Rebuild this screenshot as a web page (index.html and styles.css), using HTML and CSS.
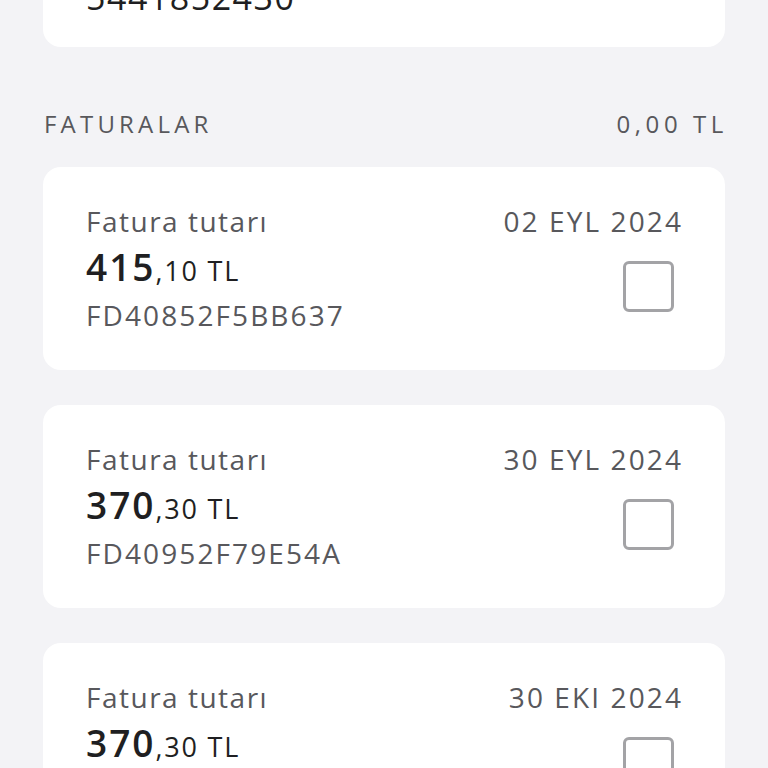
FILE: index.html
```html
<!DOCTYPE html>
<html lang="tr">
<head>
    <meta charset="UTF-8">
    <meta name="viewport" content="width=device-width, initial-scale=1.0">
    <title>Faturalar</title>
    <link rel="stylesheet" href="styles.css">
</head>
<body>
    <div class="page">
        <!-- abone bilgisi -->
        <div class="card account">
            <div class="account-no">5441852430</div>
        </div>

        <div class="section-head">
            <span>FATURALAR</span>
            <span>0,00 TL</span>
        </div>

        <div class="card invoice">
            <div class="invoice-info">
                <div class="label">Fatura tutarı</div>
                <div class="amount"><b>415</b>,10 TL</div>
                <div class="code">FD40852F5BB637</div>
            </div>
            <div class="invoice-side">
                <div class="date">02 EYL 2024</div>
                <div class="check"></div>
            </div>
        </div>

        <div class="card invoice">
            <div class="invoice-info">
                <div class="label">Fatura tutarı</div>
                <div class="amount"><b>370</b>,30 TL</div>
                <div class="code">FD40952F79E54A</div>
            </div>
            <div class="invoice-side">
                <div class="date">30 EYL 2024</div>
                <div class="check"></div>
            </div>
        </div>

        <div class="card invoice">
            <div class="invoice-info">
                <div class="label">Fatura tutarı</div>
                <div class="amount"><b>370</b>,30 TL</div>
                <div class="code">FD41052F8A21C7</div>
            </div>
            <div class="invoice-side">
                <div class="date">30 EKI 2024</div>
                <div class="check"></div>
            </div>
        </div>
    </div>
</body>
</html>
```

FILE: styles.css
```css
/* styles.css */
body {
    margin: 0;
    background-color: #f3f3f6;
    font-family: "Open Sans", "DejaVu Sans", sans-serif;
    color: #58585c;
    overflow: hidden;
}

.page {
    padding: 0 43px;
    margin-top: -60px;
}

.card {
    background-color: #fff;
    border-radius: 18px;
}

.account {
    padding: 37px 43px 30px;
}

.account-no {
    font-size: 34px;
    line-height: 40px;
    color: #1f1f22;
    letter-spacing: 1.5px;
}

.section-head {
    display: flex;
    justify-content: space-between;
    padding: 0 0 0 1px;
    margin: 63px 0 29px;
    font-size: 24px;
    line-height: 28px;
    letter-spacing: 4.2px;
}

.section-head span:last-child {
    margin-right: -3px;
    letter-spacing: 4.6px;
}

.invoice {
    display: flex;
    justify-content: space-between;
    height: 203px;
    box-sizing: border-box;
    padding: 35px 44px 0 43px;
    margin-bottom: 35px;
}

.label,
.date,
.code {
    font-size: 28px;
    line-height: 38px;
    letter-spacing: 1.5px;
}

.date,
.code {
    letter-spacing: 2.1px;
}

.date {
    margin-right: -2px;
}

.amount {
    margin-top: 2px;
    font-size: 27px;
    line-height: 50px;
    letter-spacing: 1.8px;
    color: #1f1f22;
}

.amount b {
    font-size: 37px;
    font-weight: 600;
    letter-spacing: 2px;
}

.invoice-side {
    display: flex;
    flex-direction: column;
    align-items: flex-end;
}

.check {
    width: 45px;
    height: 45px;
    border: 3px solid #a3a3a6;
    border-radius: 6px;
    margin: 21px 7px 0 0;
}
```
